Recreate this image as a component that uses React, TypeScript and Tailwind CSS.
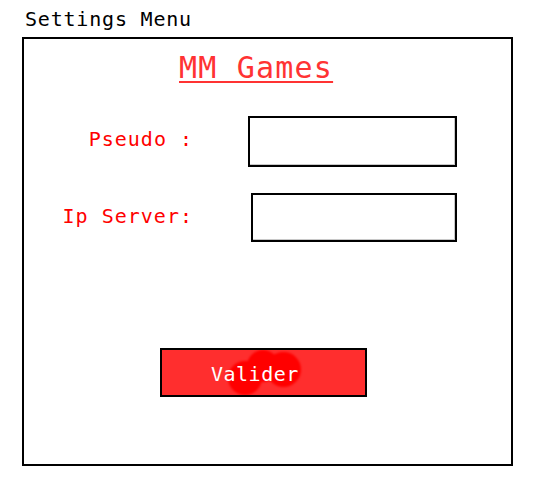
export default function App() {
  return (
    <div className="w-[540px] h-[484px] bg-white font-['DejaVu_Sans_Mono',monospace] overflow-hidden">
      <div className="pt-[9px] pl-[25px] text-[20px] leading-[20px] tracking-[0.8px] text-black">
        Settings Menu
      </div>

      <div className="mt-[8px] ml-[22px] w-[491px] h-[429px] border-2 border-black flex flex-col">
        {/* heading */}
        <div className="mt-[14px] pl-[155px] flex">
          <span className="text-[30px] leading-[30px] tracking-[1.2px] text-[#ff3333] underline decoration-2 underline-offset-[3px]">
            MM Games
          </span>
        </div>

        {/* pseudo row */}
        <div className="mt-[33px] flex items-start">
          <label className="w-[169px] mt-[13px] text-right text-[20px] leading-[20px] tracking-[1px] text-[#ff0000]">
            Pseudo :
          </label>
          <input className="ml-[55px] w-[209px] h-[51px] border-2 border-black shadow-[inset_-1px_-1px_0_#c8c8c8] bg-white outline-none" />
        </div>

        {/* ip server row */}
        <div className="mt-[26px] flex items-start">
          <label className="w-[169px] mt-[13px] text-right text-[20px] leading-[20px] tracking-[1px] text-[#ff0000]">
            Ip Server:
          </label>
          <input className="ml-[58px] w-[206px] h-[49px] border-2 border-black shadow-[inset_-1px_-1px_0_#c8c8c8] bg-white outline-none" />
        </div>

        {/* submit */}
        <button className="relative mt-[106px] ml-[136px] w-[207px] h-[49px] border-2 border-black bg-[#ff2e2e] flex items-center pl-[49px] pt-[3px] text-white text-[20px] leading-[20px] tracking-[0.5px] overflow-hidden">
          <span className="absolute left-[66px] top-[11px] w-[34px] h-[34px] rounded-full bg-[#ff0000] blur-[1px]" />
          <span className="absolute left-[85px] top-[0px] w-[32px] h-[32px] rounded-full bg-[#ff0000] blur-[1px]" />
          <span className="absolute left-[104px] top-[2px] w-[35px] h-[35px] rounded-full bg-[#ff0000] blur-[1px]" />
          <span className="relative">Valider</span>
        </button>
      </div>
    </div>
  );
}
